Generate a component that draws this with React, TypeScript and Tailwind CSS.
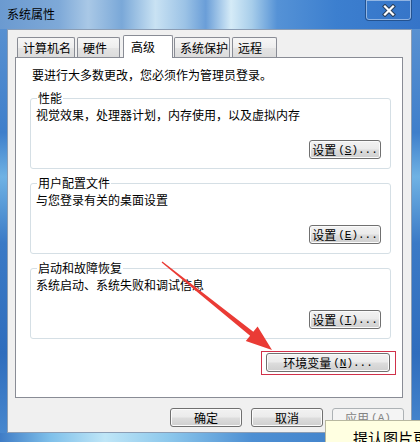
import React from "react";

function Btn({ children, w, disabled }: { children: React.ReactNode; w: string; disabled?: boolean }) {
  if (disabled) {
    return (
      <div className={`${w} h-[19px] rounded-[3px] border border-[#adb2b5] bg-[#f4f4f4] text-[#838383] flex items-center justify-center leading-[16px] whitespace-nowrap`}>
        {children}
      </div>
    );
  }
  return (
    <div
      className={`${w} h-[19px] rounded-[3px] border border-[#707070] bg-[linear-gradient(180deg,#f2f2f2_0%,#ebebeb_48%,#dddddd_52%,#cfcfcf_100%)] shadow-[inset_0_0_0_1px_#fbfbfb] text-black flex items-center justify-center leading-[16px] whitespace-nowrap`}
    >
      {children}
    </div>
  );
}

function Acc({ k }: { k: string }) {
  return (
    <span className="ml-[2px] font-['Liberation_Mono',monospace] text-[11px]">
      (<u>{k}</u>)...
    </span>
  );
}

function Group({ label, desc, btn }: { label: string; desc: string; btn: React.ReactNode }) {
  return (
    <div className="relative ml-[14px] mr-[11px] border border-[#d5dfe5] rounded-[3px] pt-[8px] pb-[9px]">
      <span className="absolute -top-[9px] left-[6px] bg-white px-[1px] leading-[16px]">{label}</span>
      <div className="pl-[5px] leading-[16px]">{desc}</div>
      <div className="mt-[17px] flex justify-end pr-[9px]">{btn}</div>
    </div>
  );
}

export default function App() {
  const tabBase =
    "h-[20px] mb-[1px] border border-b-0 border-[#898c95] rounded-t-[2px] bg-[linear-gradient(180deg,#f6f6f6_0%,#eeeeee_50%,#e4e4e4_51%,#dcdcdc_100%)] pt-[2px] pl-[5px] leading-[16px] whitespace-nowrap";
  return (
    <div className="relative w-[420px] h-[442px] overflow-hidden font-['Noto_Sans_CJK_SC',sans-serif] text-[12px] text-black bg-[linear-gradient(180deg,#5f95d2_0%,#3f7fcb_30%,#6fb2e4_40%,#3b7ac6_55%,#2f6dbd_80%,#4a8ad0_100%)]">
      {/* title bar */}
      <div className="h-[29px] flex items-start justify-between bg-[linear-gradient(90deg,#6b9ad0_0%,#7ea9d8_14%,#a9c8e6_21%,#7aa8d8_29%,#c9e2f3_37%,#9cc3e6_44%,#6a9ed8_49%,#d5ebf7_55%,#a7cdea_60%,#5592d6_66%,#3c7fcf_80%,#3574c8_100%)]">
        <span className="ml-[7px] mt-[6px] leading-[16px] text-[12px] text-black">系统属性</span>
        <div className="mr-[8px] w-[47px] h-[21px] rounded-b-[4px] border border-t-0 border-[#24528f] shadow-[inset_0_0_0_1px_rgba(255,255,255,0.45)] flex items-center justify-center">
          <svg width="16" height="13" viewBox="0 0 16 13">
            <path d="M4 2.5 L12 10.5 M12 2.5 L4 10.5" stroke="#2a3f5c" strokeWidth="4.2" strokeLinecap="square" />
            <path d="M4 2.5 L12 10.5 M12 2.5 L4 10.5" stroke="#ffffff" strokeWidth="2.2" strokeLinecap="square" />
          </svg>
        </div>
      </div>

      {/* client */}
      <div className="ml-[7px] mr-[8px] h-[404px] bg-[#f0f0f0] border border-[#8b9db4] flex flex-col">
        {/* tabs */}
        <div className="pt-[5px]">
          <div className="relative z-10 -mb-[1px] h-[23px] flex items-end">
            <div className={`${tabBase} ml-[9px] w-[58px]`}>计算机名</div>
            <div className={`${tabBase} ml-[2px] w-[43px]`}>硬件</div>
            <div className="ml-[3px] w-[50px] h-[23px] border border-b-0 border-[#898c95] rounded-t-[2px] bg-white pt-[3px] pl-[7px] leading-[16px]">高级</div>
            <div className={`${tabBase} ml-[1px] w-[56px] pl-[4px]`}>系统保护</div>
            <div className={`${tabBase} ml-[2px] w-[45px]`}>远程</div>
          </div>
        </div>

        {/* panel */}
        <div className="ml-[7px] mr-[8px] h-[341px] bg-white border border-[#898c95] pt-[9px]">
          <div className="ml-[16px] leading-[16px]">要进行大多数更改，您必须作为管理员登录。</div>
          <div className="mt-[15px]">
            <Group
              label="性能"
              desc="视觉效果，处理器计划，内存使用，以及虚拟内存"
              btn={
                <Btn w="w-[72px]">
                  设置<Acc k="S" />
                </Btn>
              }
            />
          </div>
          <div className="mt-[14px]">
            <Group
              label="用户配置文件"
              desc="与您登录有关的桌面设置"
              btn={
                <Btn w="w-[72px]">
                  设置<Acc k="E" />
                </Btn>
              }
            />
          </div>
          <div className="mt-[14px]">
            <Group
              label="启动和故障恢复"
              desc="系统启动、系统失败和调试信息"
              btn={
                <Btn w="w-[72px]">
                  设置<Acc k="T" />
                </Btn>
              }
            />
          </div>
          <div className="mt-[14px] flex justify-end pr-[12px]">
            <div className="relative">
              <Btn w="w-[124px]">
                环境变量<Acc k="N" />
              </Btn>
              <div className="absolute -left-[5px] -top-[2px] -right-[6px] -bottom-[3px] border border-[#d0314a]" />
            </div>
          </div>
        </div>

        {/* bottom buttons */}
        <div className="mt-[10px] flex justify-end gap-[9px] pr-[7px]">
          <Btn w="w-[72px]">确定</Btn>
          <Btn w="w-[72px]">取消</Btn>
          <Btn w="w-[72px]" disabled>
            应用
            <span className="ml-[2px] font-['Liberation_Mono',monospace] text-[11px]">(A)</span>
          </Btn>
        </div>
      </div>

      {/* bottom frame */}
      <div className="h-[9px] bg-[linear-gradient(90deg,#3f7cc6_0%,#7fc0ea_12%,#bfe6f7_25%,#8dc8ec_40%,#4d8fd3_60%,#3a79c5_100%)]" />

      {/* red annotation arrow */}
      <svg className="absolute left-0 top-0 pointer-events-none" width="420" height="442" viewBox="0 0 420 442">
        <polygon
          points="162.4,261.5 253.3,331.8 257.6,326.6 272,350 245.8,341 250.1,335.8 161.6,262.5"
          fill="#ea3b35"
        />
      </svg>

      {/* tooltip overlay */}
      <div className="absolute left-[325px] top-[420px] w-[120px] h-[40px] bg-[#ffffe1] border-l border-t border-[#b8b8a0] pl-[27px] pt-[7px] text-[15px] leading-[20px] whitespace-nowrap text-black">
        提认图片更加
      </div>
    </div>
  );
}
